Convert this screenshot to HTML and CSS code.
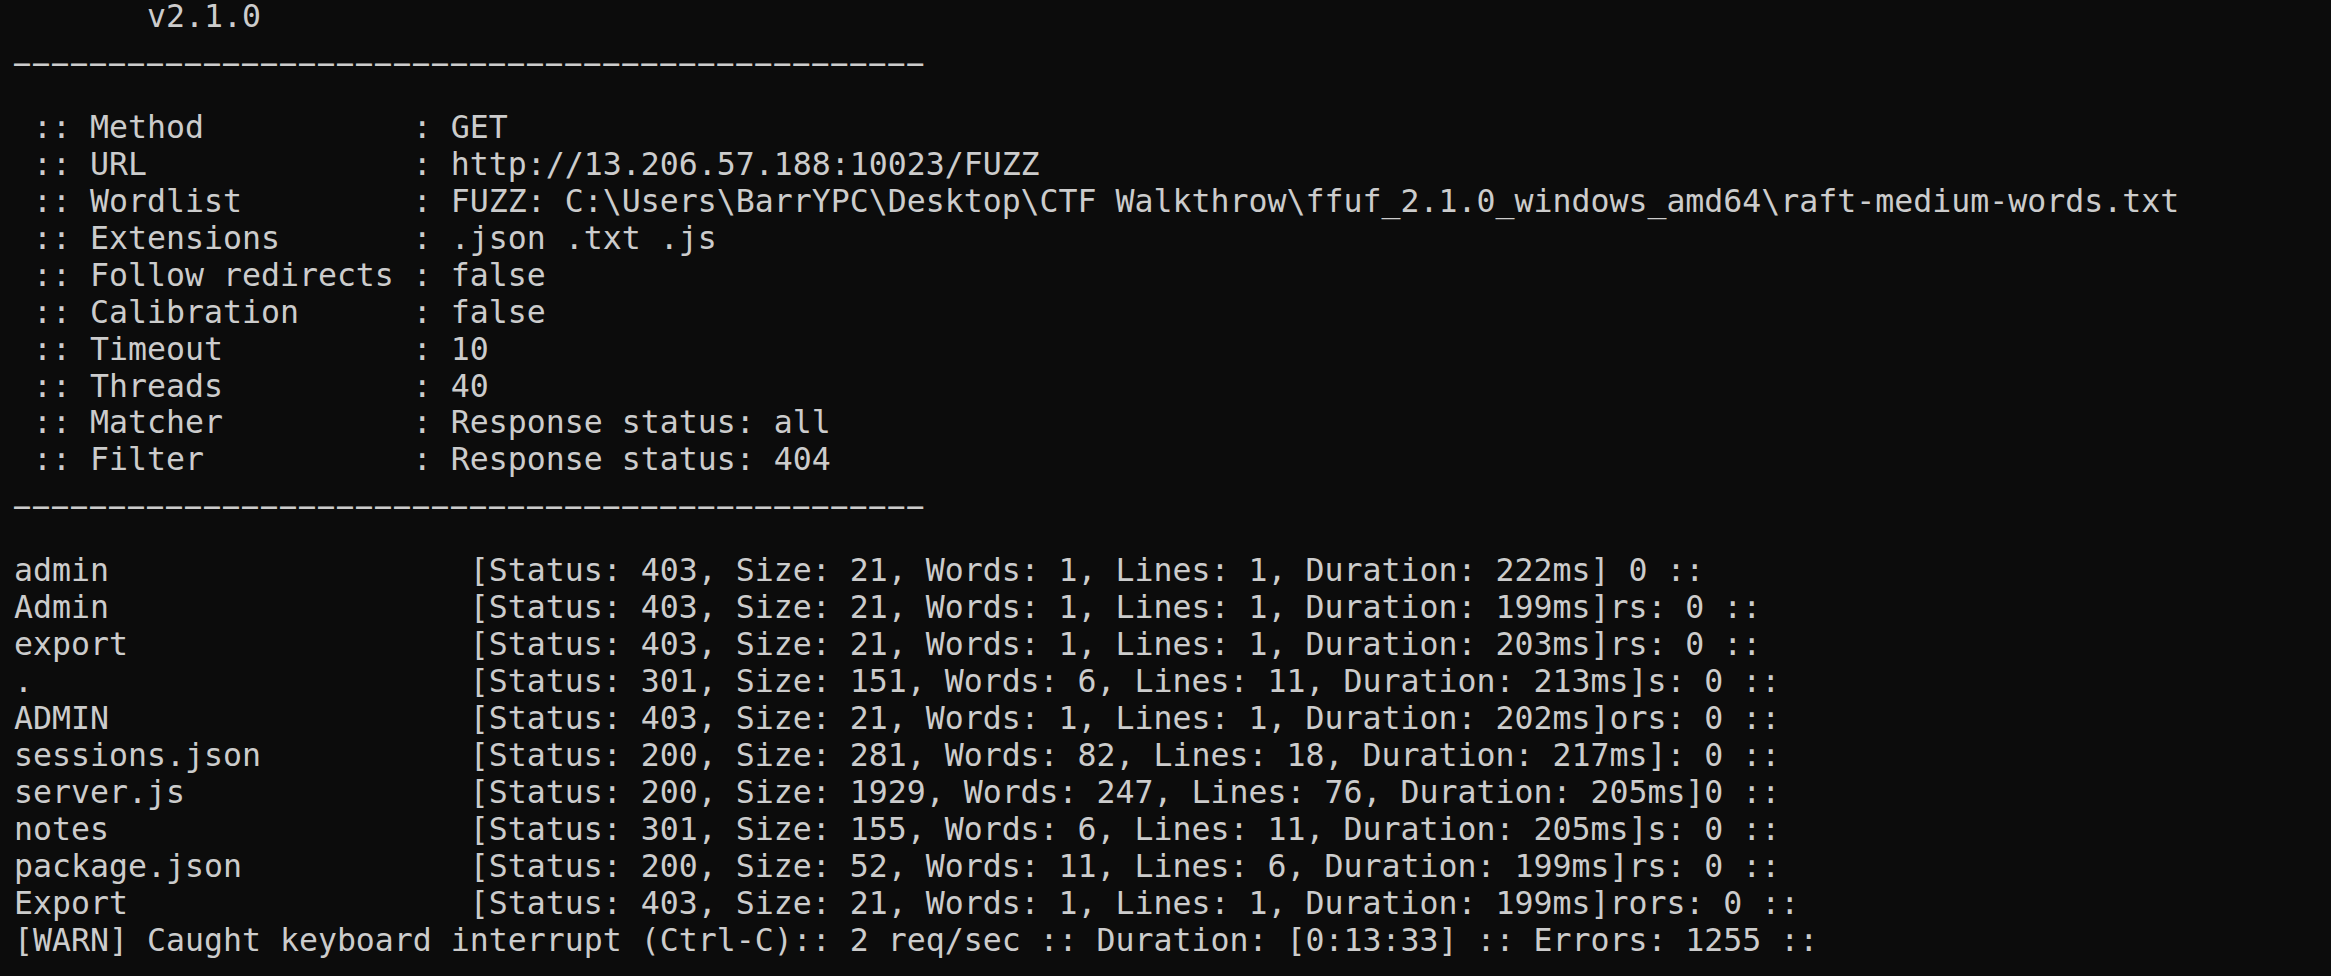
FILE: index.html
```html
<!DOCTYPE html>
<html lang="en">
<head>
<meta charset="utf-8">
<title>ffuf</title>
<link rel="stylesheet" href="styles.css">
</head>
<body>
<main class="terminal">
<pre class="output">       v2.1.0
<span class="rule">________________________________________________</span>

 :: Method           : GET
 :: URL              : http://13.206.57.188:10023/FUZZ
 :: Wordlist         : FUZZ: C:\Users\BarrYPC\Desktop\CTF Walkthrow\ffuf_2.1.0_windows_amd64\raft-medium-words.txt
 :: Extensions       : .json .txt .js
 :: Follow redirects : false
 :: Calibration      : false
 :: Timeout          : 10
 :: Threads          : 40
 :: Matcher          : Response status: all
 :: Filter           : Response status: 404
<span class="rule">________________________________________________</span>

admin                   [Status: 403, Size: 21, Words: 1, Lines: 1, Duration: 222ms] 0 ::
Admin                   [Status: 403, Size: 21, Words: 1, Lines: 1, Duration: 199ms]rs: 0 ::
export                  [Status: 403, Size: 21, Words: 1, Lines: 1, Duration: 203ms]rs: 0 ::
.                       [Status: 301, Size: 151, Words: 6, Lines: 11, Duration: 213ms]s: 0 ::
ADMIN                   [Status: 403, Size: 21, Words: 1, Lines: 1, Duration: 202ms]ors: 0 ::
sessions.json           [Status: 200, Size: 281, Words: 82, Lines: 18, Duration: 217ms]: 0 ::
server.js               [Status: 200, Size: 1929, Words: 247, Lines: 76, Duration: 205ms]0 ::
notes                   [Status: 301, Size: 155, Words: 6, Lines: 11, Duration: 205ms]s: 0 ::
package.json            [Status: 200, Size: 52, Words: 11, Lines: 6, Duration: 199ms]rs: 0 ::
Export                  [Status: 403, Size: 21, Words: 1, Lines: 1, Duration: 199ms]rors: 0 ::
[WARN] Caught keyboard interrupt (Ctrl-C):: 2 req/sec :: Duration: [0:13:33] :: Errors: 1255 ::</pre>
</main>
</body>
</html>
```
FILE: styles.css
```css
html, body {
  margin: 0;
  padding: 0;
  background: #0c0c0c;
  height: 100%;
  overflow: hidden;
}

.terminal {
  padding-left: 14px;
  margin-top: -2px;
}

.output {
  margin: 0;
  font-family: "DejaVu Sans Mono", "Liberation Mono", monospace;
  font-size: 31.56px;
  line-height: 36.95px;
  color: #cccccc;
  white-space: pre;
}

.rule {
  font-size: 26.5px;
  font-weight: bold;
  line-height: 0;
  letter-spacing: 3.05px;
  vertical-align: 4px;
}
```
